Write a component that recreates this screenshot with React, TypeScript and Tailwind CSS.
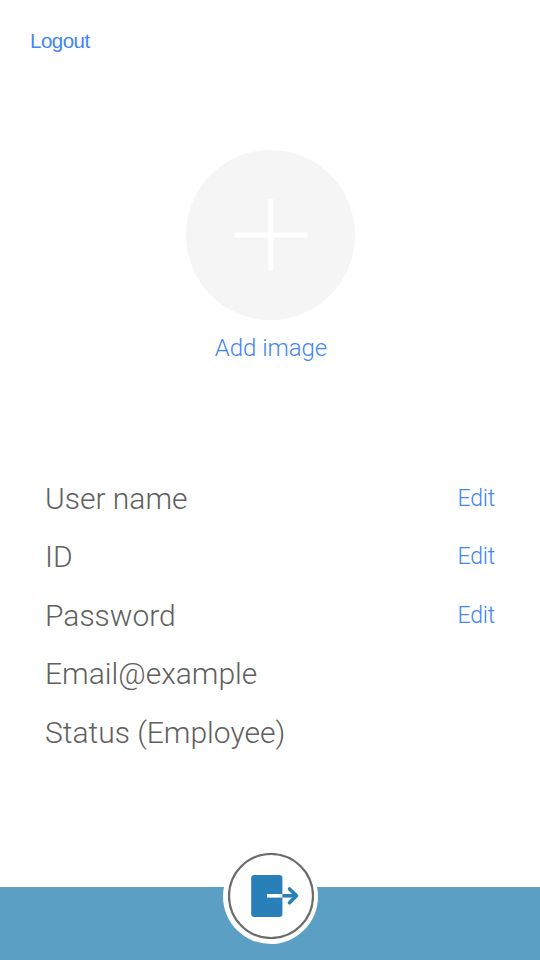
const rows = [
  { label: 'User name', edit: true },
  { label: 'ID', edit: true },
  { label: 'Password', edit: true },
  { label: 'Email@example', edit: false },
  { label: 'Status (Employee)', edit: false },
];

export default function App() {
  return (
    <main className="flex h-[960px] w-[540px] flex-col overflow-hidden bg-white font-['Roboto',sans-serif] font-light">
      <header className="flex h-[150px] px-[30px] pt-[26px]">
        <button className="h-[30px] font-['Liberation_Sans',sans-serif] text-[20.5px] leading-[30px] font-normal tracking-[-0.5px] text-[#4285f4]">Logout</button>
      </header>
      <section className="ml-px flex h-[319px] flex-col items-center">
        <div className="flex size-[169.5px] items-center justify-center rounded-full bg-[#f5f5f5]">
          <svg className="size-[74px]" viewBox="0 0 74 74" stroke="white">
            <path d="M0.5 37H73.5" strokeWidth="4.8" />
            <path d="M36.8 1V72.5" strokeWidth="5" />
          </svg>
        </div>
        <button className="mt-[12.5px] pl-px text-[24px] leading-[32px] tracking-[-0.05px] text-[#4285f4]">Add image</button>
      </section>
      <ul className="flex flex-1 flex-col px-[45px]">
        {rows.map((row) => (
          <li key={row.label} className="flex h-[58.5px] items-center justify-between">
            <span className="text-[30px] text-[#606060]">{row.label}</span>
            {row.edit && <button className="pt-px text-[23px] tracking-[-0.2px] text-[#4285f4]">Edit</button>}
          </li>
        ))}
      </ul>
      <footer className="flex h-[73.5px] justify-center bg-[#5b9fc5]">
        <button className="-mt-[38px] ml-px flex size-[95px] items-center justify-center rounded-full bg-white">
          <svg className="size-[86px]" viewBox="0 0 86 86" fill="none">
            <circle cx="43" cy="43" r="42" stroke="#6b6b6b" strokeWidth="2.2" />
            <rect x="23.2" y="22" width="31.2" height="42" rx="3" fill="#2980b9" />
            <path d="M39 42.8H54.5" stroke="white" strokeWidth="3.6" />
            <path d="M54.5 42.8H69" stroke="#2980b9" strokeWidth="3.6" />
            <path d="M61.5 36L68.5 42.8L61.5 49.7" stroke="#2980b9" strokeWidth="3.6" strokeLinecap="round" strokeLinejoin="round" />
          </svg>
        </button>
      </footer>
    </main>
  );
}
